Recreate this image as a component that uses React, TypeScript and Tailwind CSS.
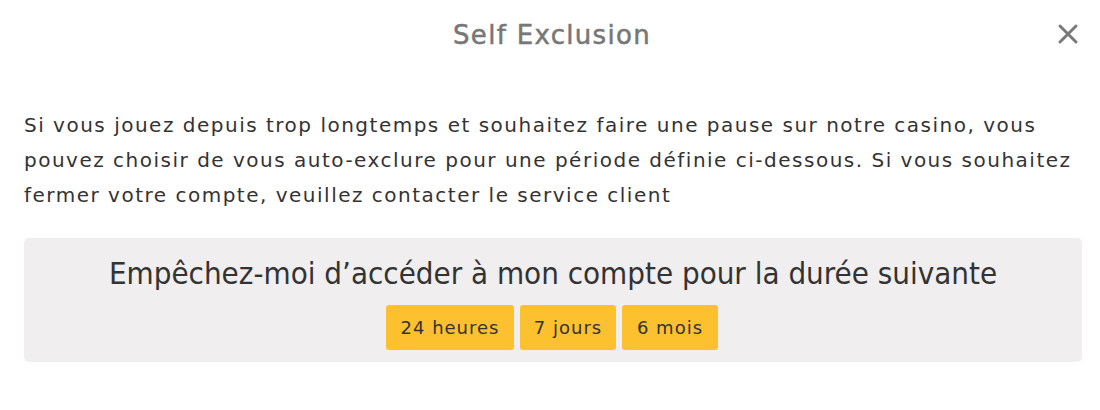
import React from "react";

export default function App() {
  return (
    <div className="w-[1100px] h-[410px] bg-white relative" style={{ fontFamily: '"DejaVu Sans", sans-serif' }}>
      <div className="h-[70px] flex items-center justify-center relative">
        <h1 className="text-[26px] text-[#777777] tracking-[1.3px] [-webkit-text-stroke:0.5px_#777777] pl-[4px]">Self Exclusion</h1>
        <button className="absolute right-[20px] top-[22px] w-[24px] h-[24px] flex items-center justify-center">
          <svg width="22" height="22" viewBox="0 0 22 22" stroke="#7a7a7a" strokeWidth="3" strokeLinecap="round">
            <line x1="3" y1="3" x2="19" y2="19" />
            <line x1="19" y1="3" x2="3" y2="19" />
          </svg>
        </button>
      </div>
      <div className="pl-[24px] pr-[18px] pt-[38px]">
        <p className="text-[20px] leading-[35px] text-[#333333] whitespace-nowrap tracking-[1.5px]">
          Si vous jouez depuis trop longtemps et souhaitez faire une pause sur notre casino, vous
          <br />
          pouvez choisir de vous auto-exclure pour une période définie ci-dessous. Si vous souhaitez
          <br />
          fermer votre compte, veuillez contacter le service client
        </p>
        <div className="mt-[25px] bg-[#f0eeef] rounded-[5px] h-[124px] flex flex-col items-center pt-[13px]">
          <h2 className="text-[31px] leading-[44px] text-[#333333]" style={{ fontFamily: '"Liberation Sans Narrow", "DejaVu Sans Condensed", sans-serif' }}>
            Empêchez-moi d’accéder à mon compte pour la durée suivante
          </h2>
          <div className="flex gap-[6px] mt-[10px] pr-[2px]">
            {[
              ["24 heures", "w-[128px]"],
              ["7 jours", "w-[96px]"],
              ["6 mois", "w-[96px]"],
            ].map(([t, w]) => (
              <button key={t} className={`${w} h-[45px] bg-[#fdc02f] rounded-[3px] text-[18px] tracking-[1px] text-[#333333]`}>
                {t}
              </button>
            ))}
          </div>
        </div>
      </div>
    </div>
  );
}
